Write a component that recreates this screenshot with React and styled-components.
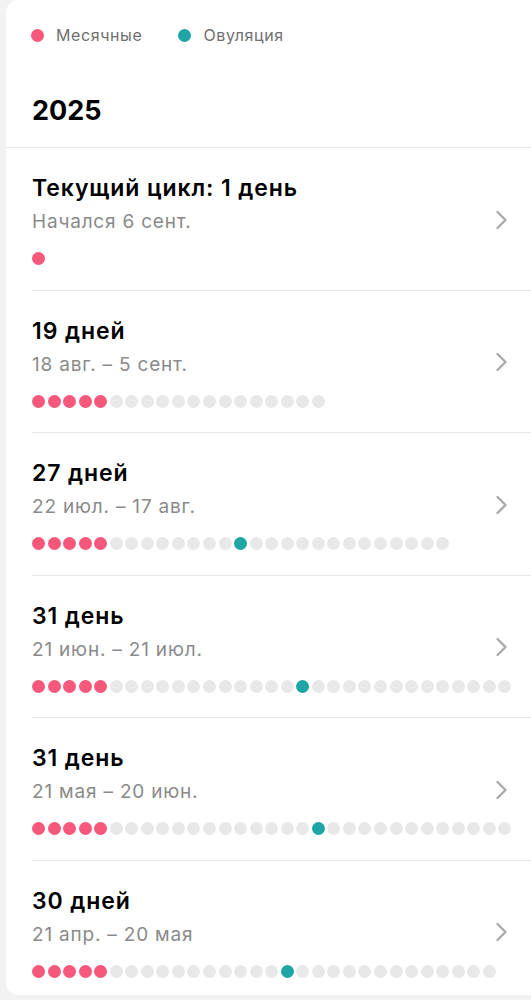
import styled, { createGlobalStyle } from "styled-components"

const GlobalStyle = createGlobalStyle`
  html, body {
    margin: 0;
    padding: 0;
    background: #f2f2f2;
  }
  body {
    font-family: Inter, "Noto Sans", "Liberation Sans", sans-serif;
    -webkit-font-smoothing: antialiased;
  }
`

const PINK = "#f5587b"
const TEAL = "#1fa5a5"
const EMPTY = "#e8e8e8"

const cycles = [
  { title: "Текущий цикл: 1 день", range: "Начался 6 сент.", total: 1, period: 1, ovulation: -1 },
  { title: "19 дней", range: "18 авг. – 5 сент.", total: 19, period: 5, ovulation: -1 },
  { title: "27 дней", range: "22 июл. – 17 авг.", total: 27, period: 5, ovulation: 13 },
  { title: "31 день", range: "21 июн. – 21 июл.", total: 31, period: 5, ovulation: 17 },
  { title: "31 день", range: "21 мая – 20 июн.", total: 31, period: 5, ovulation: 18 },
  { title: "30 дней", range: "21 апр. – 20 мая", total: 30, period: 5, ovulation: 16 },
]

const dotColor = (c, i) => {
  if (i < c.period) return PINK
  if (i === c.ovulation) return TEAL
  return EMPTY
}

const Chevron = () => (
  <svg width="13" height="20" viewBox="0 0 13 20" fill="none">
    <polyline points="2.5,2 10.5,10 2.5,18" stroke="#a9a9a9" strokeWidth="2.4" strokeLinecap="round" strokeLinejoin="round" />
  </svg>
)

const App = () => {
  return (
    <>
      <GlobalStyle />
      <Card>
        <Legend>
          <LegendItem>
            <Dot $color={PINK} />
            <LegendText>Месячные</LegendText>
          </LegendItem>
          <LegendItem>
            <Dot $color={TEAL} />
            <LegendText>Овуляция</LegendText>
          </LegendItem>
        </Legend>
        <Year>2025</Year>
        <List>
          {cycles.map((c, idx) => (
            <Row key={idx}>
              <RowInner>
                <Info>
                  <Title>{c.title}</Title>
                  <Range>{c.range}</Range>
                  <Dots>
                    {Array.from({ length: c.total }).map((_, i) => (
                      <Dot key={i} $color={dotColor(c, i)} />
                    ))}
                  </Dots>
                </Info>
                <Chevron />
              </RowInner>
            </Row>
          ))}
        </List>
      </Card>
    </>
  )
}

const Card = styled.div`
  margin-left: 6px;
  background: #ffffff;
  border-radius: 13px 0 0 13px;
  height: 995px;
  overflow: hidden;
`

const Legend = styled.div`
  display: flex;
  align-items: center;
  gap: 36px;
  padding: 25px 0 0 25px;
`

const LegendItem = styled.div`
  display: flex;
  align-items: center;
  gap: 12px;
`

const LegendText = styled.span`
  font-size: 16px;
  line-height: 20px;
  color: #6f6f6f;
  letter-spacing: 0.6px;
`

const Dot = styled.span`
  display: block;
  flex: none;
  width: 13px;
  height: 13px;
  border-radius: 50%;
  background: ${(p) => p.$color};
`

const Year = styled.div`
  padding: 50px 0 20px 26px;
  font-size: 27px;
  line-height: 32px;
  font-weight: 700;
  color: #000;
  border-bottom: 1px solid #e6e6e6;
`

const List = styled.div`
  display: flex;
  flex-direction: column;
`

const Row = styled.div`
  padding-left: 26px;
`

const RowInner = styled.div`
  display: flex;
  align-items: center;
  gap: 8px;
  padding: 26px 23px 24.5px 0;
  border-bottom: 1px solid #e6e6e6;

  ${Row}:last-child & {
    border-bottom: none;
  }
`

const Info = styled.div`
  flex: 1;
  min-width: 0;
  display: flex;
  flex-direction: column;
`

const Title = styled.div`
  font-size: 23px;
  line-height: 28px;
  font-weight: 600;
  letter-spacing: 0.9px;
  color: #000;
`

const Range = styled.div`
  margin-top: 8px;
  font-size: 19px;
  line-height: 24px;
  letter-spacing: 0.8px;
  color: #8a8a8a;
`

const Dots = styled.div`
  display: flex;
  gap: 2.55px;
  margin-top: 18px;
`

export default App
